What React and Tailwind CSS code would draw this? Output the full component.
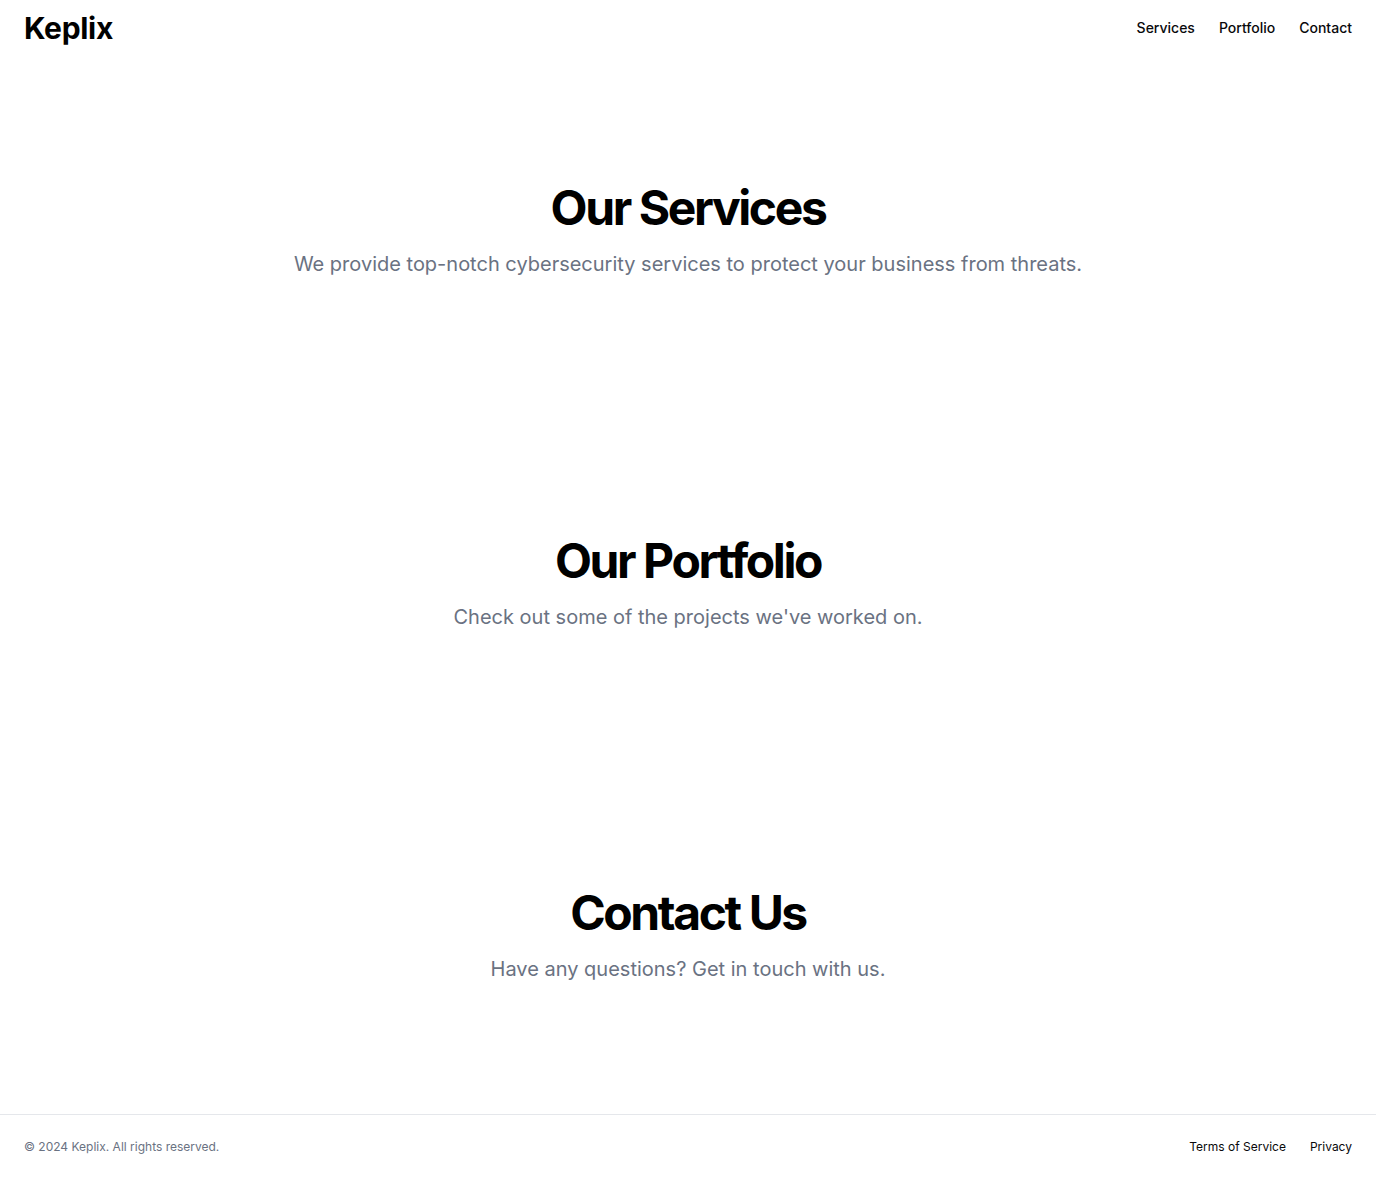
export default function App() {
  const font = { fontFamily: "Inter, 'Liberation Sans', sans-serif" };
  return (
    <div className="flex min-h-screen flex-col bg-white text-black" style={font}>
      <header className="flex h-14 items-center px-6">
        <a className="text-3xl font-bold tracking-[-0.01em] text-black">Keplix</a>
        <nav className="ml-auto flex gap-6">
          <a className="text-sm font-medium text-[#09090b]">Services</a>
          <a className="text-sm font-medium text-[#09090b]">Portfolio</a>
          <a className="text-sm font-medium text-[#09090b]">Contact</a>
        </nav>
      </header>
      <main className="flex flex-1 flex-col">
        {[
          ["Our Services", "We provide top-notch cybersecurity services to protect your business from threats."],
          ["Our Portfolio", "Check out some of the projects we've worked on."],
          ["Contact Us", "Have any questions? Get in touch with us."],
        ].map(([h, p]) => (
          <section key={h} className="flex flex-1 items-center justify-center px-6">
            <div className="flex flex-col items-center space-y-4 text-center">
              <h2 className="text-5xl font-bold tracking-tighter text-black">{h}</h2>
              <p className="max-w-[900px] text-xl/relaxed text-gray-500">{p}</p>
            </div>
          </section>
        ))}
      </main>
      <footer className="flex items-center border-t border-gray-200 px-6 py-6">
        <p className="text-xs text-gray-500">© 2024 Keplix. All rights reserved.</p>
        <nav className="ml-auto flex gap-6">
          <a className="text-xs text-[#09090b]">Terms of Service</a>
          <a className="text-xs text-[#09090b]">Privacy</a>
        </nav>
      </footer>
    </div>
  );
}
